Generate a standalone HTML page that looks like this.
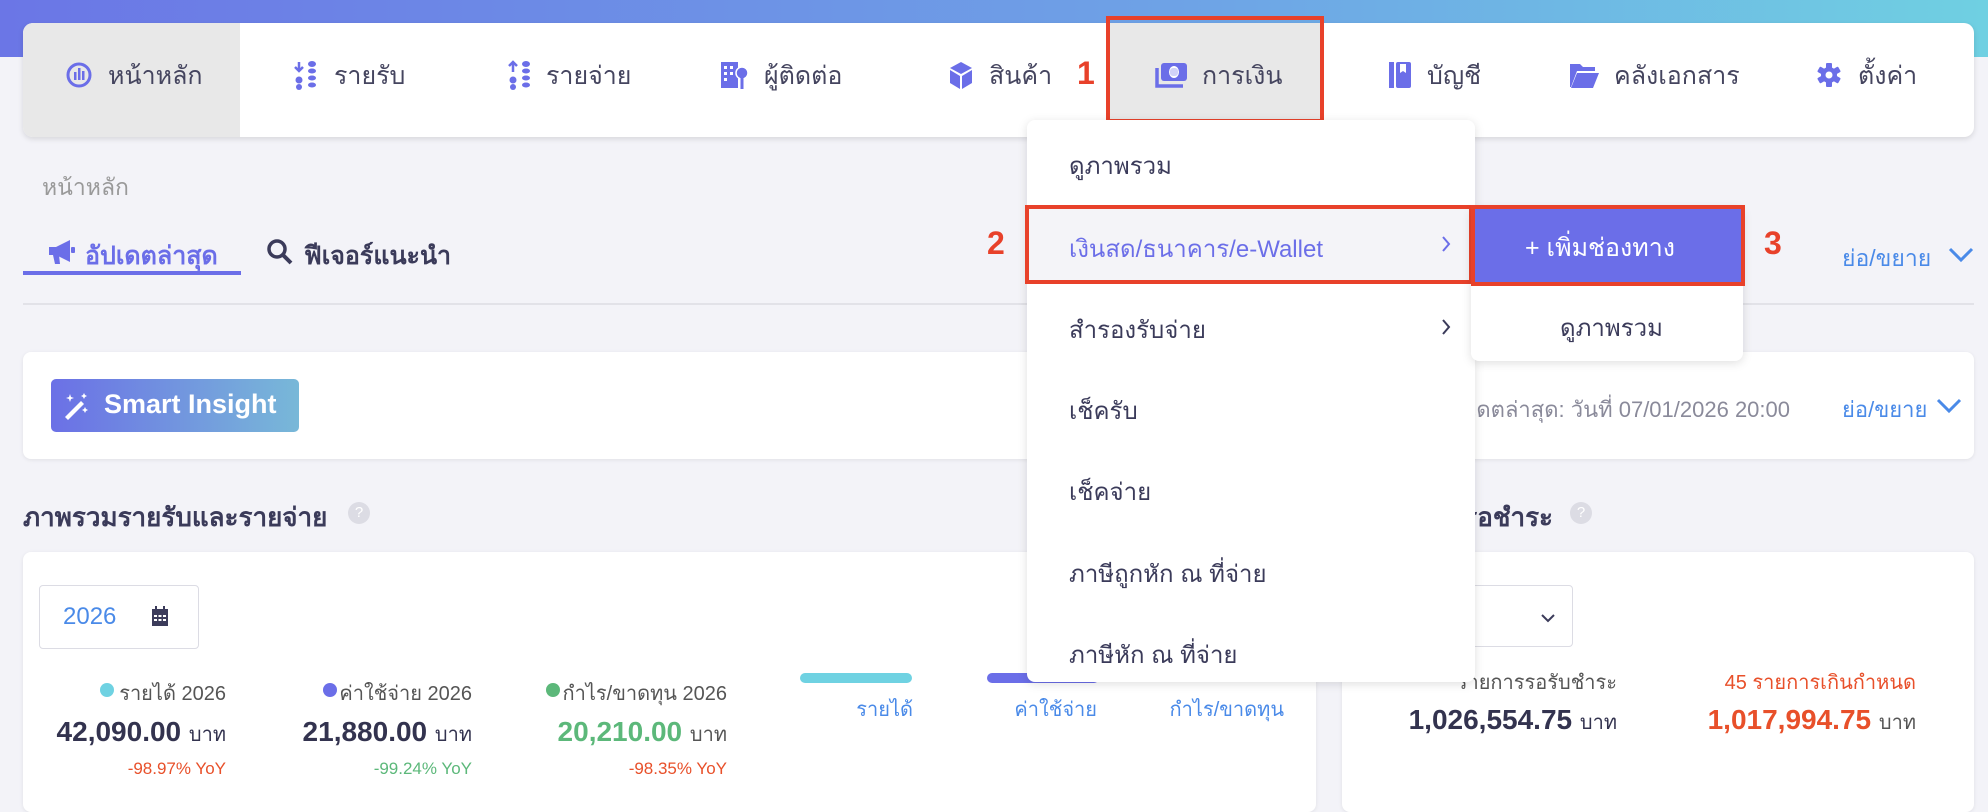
<!DOCTYPE html>
<html><head><meta charset="utf-8">
<style>
*{margin:0;padding:0;box-sizing:border-box}
body{width:1988px;height:780px;overflow:hidden;background:#f3f3f8;font-family:"Liberation Sans","Noto Sans CJK SC",sans-serif;color:#3b3b5a;position:relative}
.a{position:absolute;white-space:nowrap}
.band{left:0;top:0;width:1988px;height:57px;background:linear-gradient(90deg,#6b76e6,#6ea3e6 60%,#6fd0e2)}
.nav{left:23px;top:23px;width:1951px;height:114px;background:#fff;border-radius:10px;box-shadow:0 2px 6px rgba(0,0,0,.12);overflow:hidden}
.navt{font-size:25px;top:56px;color:#45455f}
.ic{position:absolute;top:60px;width:26px;height:30px}
.red{border:4px solid #e8412a}
.rn{color:#e8412a;font-size:32px;font-weight:bold}
.dd{left:1027px;top:120px;width:448px;height:562px;background:#fff;border-radius:8px;box-shadow:0 2px 10px rgba(0,0,0,.13)}
.di{left:1069px;font-size:24px;color:#3b3b5a}
.card{background:#fff;border-radius:8px;box-shadow:0 1px 4px rgba(0,0,0,.08)}
</style></head><body>
<div class="a band"></div>
<div class="a nav">
  <div class="a" style="left:0;top:0;width:217px;height:114px;background:#e8e8e8"></div>
  <div class="a" style="left:1084px;top:0;width:216px;height:114px;background:#e8e8e8"></div>
</div>
<!-- nav icons -->
<svg class="ic" style="left:66px" viewBox="0 0 26 30"><circle cx="13" cy="15" r="11" fill="none" stroke="#6b6ee8" stroke-width="3"/><rect x="8" y="12" width="2.5" height="8" fill="#6b6ee8"/><rect x="12" y="8" width="2.5" height="12" fill="#6b6ee8"/><rect x="16" y="11" width="2.5" height="9" fill="#6b6ee8"/></svg>
<div class="a navt" style="left:108px">หน้าหลัก</div>
<svg class="ic" style="left:293px" viewBox="0 0 26 30"><path d="M6 2v8M2 7l4 4 4-4" stroke="#6b6ee8" stroke-width="2.5" fill="none"/><circle cx="6" cy="20" r="3.5" fill="#6b6ee8"/><circle cx="6" cy="27" r="3" fill="#6b6ee8"/><g fill="#6b6ee8"><ellipse cx="19" cy="4" rx="4" ry="3"/><ellipse cx="19" cy="11" rx="4" ry="2.5"/><ellipse cx="19" cy="18" rx="4" ry="2.5"/><ellipse cx="19" cy="25" rx="4" ry="2.5"/></g></svg>
<div class="a navt" style="left:334px">รายรับ</div>
<svg class="ic" style="left:507px" viewBox="0 0 26 30"><path d="M6 12V3M2 6l4-4 4 4" stroke="#6b6ee8" stroke-width="2.5" fill="none"/><circle cx="6" cy="20" r="3.5" fill="#6b6ee8"/><circle cx="6" cy="27" r="3" fill="#6b6ee8"/><g fill="#6b6ee8"><ellipse cx="19" cy="4" rx="4" ry="3"/><ellipse cx="19" cy="11" rx="4" ry="2.5"/><ellipse cx="19" cy="18" rx="4" ry="2.5"/><ellipse cx="19" cy="25" rx="4" ry="2.5"/></g></svg>
<div class="a navt" style="left:546px">รายจ่าย</div>
<svg class="ic" style="left:720px;width:30px" viewBox="0 0 30 30"><rect x="1" y="2" width="17" height="26" fill="#6b6ee8"/><g fill="#fff"><rect x="4" y="6" width="3" height="3"/><rect x="10" y="6" width="3" height="3"/><rect x="4" y="12" width="3" height="3"/><rect x="10" y="12" width="3" height="3"/><rect x="4" y="18" width="3" height="3"/></g><circle cx="22" cy="13" r="6" fill="#6b6ee8" stroke="#fff" stroke-width="1.5"/><rect x="20.5" y="18" width="3" height="11" fill="#6b6ee8"/></svg>
<div class="a navt" style="left:764px">ผู้ติดต่อ</div>
<svg class="ic" style="left:948px" viewBox="0 0 26 30"><path d="M13 2l11 6-11 6L2 8z" fill="#6b6ee8"/><path d="M2 10l10 6v13L2 23z" fill="#6b6ee8"/><path d="M24 10l-10 6v13l10-6z" fill="#6b6ee8"/></svg>
<div class="a navt" style="left:989px">สินค้า</div>
<div class="a rn" style="left:1077px;top:55px">1</div>
<div class="a red" style="left:1106px;top:16px;width:218px;height:107px"></div>
<svg class="ic" style="left:1155px;width:34px" viewBox="0 0 34 30"><rect x="6" y="3" width="26" height="18" rx="3" fill="#6b6ee8"/><ellipse cx="19" cy="12" rx="5" ry="6" fill="#fff"/><rect x="15" y="8" width="8" height="8" rx="3" fill="#6b6ee8" opacity=".3"/><path d="M2 8v18h26" stroke="#6b6ee8" stroke-width="3.5" fill="none"/></svg>
<div class="a navt" style="left:1202px">การเงิน</div>
<svg class="ic" style="left:1387px" viewBox="0 0 26 30"><rect x="2" y="2" width="5" height="26" fill="#6b6ee8"/><rect x="9" y="2" width="15" height="26" rx="2" fill="#6b6ee8"/><path d="M13 4v9l3-2 3 2V4" fill="#fff"/></svg>
<div class="a navt" style="left:1427px">บัญชี</div>
<svg class="ic" style="left:1568px;width:32px" viewBox="0 0 32 30"><path d="M2 4h10l3 3h12v4H9L3 27H2z" fill="#6b6ee8"/><path d="M9 13h22l-6 15H3z" fill="#6b6ee8"/></svg>
<div class="a navt" style="left:1614px">คลังเอกสาร</div>
<svg class="ic" style="left:1816px" viewBox="0 0 26 30"><g fill="#6b6ee8" transform="translate(13 15)"><circle r="8"/><rect x="-3" y="-12" width="6" height="24" rx="1"/><rect x="-3" y="-12" width="6" height="24" rx="1" transform="rotate(60)"/><rect x="-3" y="-12" width="6" height="24" rx="1" transform="rotate(120)"/></g><circle cx="13" cy="15" r="3.5" fill="#fff"/></svg>
<div class="a navt" style="left:1858px">ตั้งค่า</div>

<!-- breadcrumb & tabs -->
<div class="a" style="left:42px;top:170px;font-size:23px;color:#999">หน้าหลัก</div>
<svg class="a" style="left:47px;top:238px" width="30" height="28" viewBox="0 0 30 28"><path d="M2 9h7l14-7v22L9 17H2z" fill="#6b6ee8"/><path d="M6 17h6l1 9H8z" fill="#6b6ee8"/><rect x="24" y="9" width="4" height="6" rx="1" fill="#6b6ee8"/></svg>
<div class="a" style="left:85px;top:236px;font-size:25px;color:#6b6ee8;font-weight:bold">อัปเดตล่าสุด</div>
<div class="a" style="left:23px;top:271px;width:218px;height:4px;background:#6b6ee8"></div>
<svg class="a" style="left:266px;top:238px" width="28" height="28" viewBox="0 0 28 28"><circle cx="11" cy="11" r="8" fill="none" stroke="#3b3b5a" stroke-width="3.5"/><path d="M17 17l8 8" stroke="#3b3b5a" stroke-width="4"/></svg>
<div class="a" style="left:304px;top:236px;font-size:25px;color:#3b3b5a;font-weight:bold">ฟีเจอร์แนะนำ</div>
<div class="a" style="left:23px;top:303px;width:1951px;height:2px;background:#e2e2e8"></div>

<!-- smart insight -->
<div class="a card" style="left:23px;top:352px;width:1951px;height:107px"></div>
<div class="a" style="left:51px;top:379px;width:248px;height:53px;border-radius:5px;background:linear-gradient(90deg,#6b70e6,#78b8d8)"></div>
<svg class="a" style="left:62px;top:392px" width="28" height="28" viewBox="0 0 28 28"><path d="M3 25L19 9l3 3L6 28z" fill="#fff"/><path d="M8 2l1 3 3 1-3 1-1 3-1-3-3-1 3-1zM22 1l1 2 2 1-2 1-1 2-1-2-2-1 2-1zM23 15l1 2 2 1-2 1-1 2-1-2-2-1 2-1z" fill="#fff"/></svg>
<div class="a" style="left:104px;top:389px;font-size:27px;color:#fff;font-weight:bold">Smart Insight</div>
<div class="a" style="right:198px;top:392px;font-size:22px;color:#8a8a9a">อัปเดตล่าสุด: วันที่ 07/01/2026 20:00</div>
<div class="a" style="left:1842px;top:392px;font-size:22px;color:#4a8ae8">ย่อ/ขยาย</div>
<svg class="a" style="left:1936px;top:397px" width="26" height="18" viewBox="0 0 26 18"><path d="M2 3l11 11L24 3" stroke="#4a8ae8" stroke-width="3" fill="none"/></svg>

<!-- titles -->
<div class="a" style="left:23px;top:497px;font-size:26px;font-weight:bold;color:#3b3b5a">ภาพรวมรายรับและรายจ่าย</div>
<div class="a" style="left:348px;top:502px;width:22px;height:22px;border-radius:50%;background:#dcdce4;color:#fff;font-size:15px;text-align:center;line-height:22px">?</div>
<div class="a" style="right:435px;top:497px;font-size:26px;font-weight:bold;color:#3b3b5a">ลูกหนี้รอชำระ</div>
<div class="a" style="left:1570px;top:502px;width:22px;height:22px;border-radius:50%;background:#dcdce4;color:#fff;font-size:15px;text-align:center;line-height:22px">?</div>

<!-- left card -->
<div class="a card" style="left:23px;top:552px;width:1293px;height:260px"></div>
<div class="a" style="left:39px;top:585px;width:160px;height:64px;border:1px solid #dcdce4;border-radius:4px;background:#fff"></div>
<div class="a" style="left:63px;top:603px;font-size:24px;color:#4a8ae8">2026</div>
<svg class="a" style="left:150px;top:606px" width="20" height="22" viewBox="0 0 20 22"><rect x="2" y="3" width="16" height="17" fill="#3b3b5a"/><rect x="5" y="0" width="2" height="5" fill="#3b3b5a"/><rect x="13" y="0" width="2" height="5" fill="#3b3b5a"/><g fill="#fff"><rect x="4" y="9" width="3" height="2"/><rect x="8.5" y="9" width="3" height="2"/><rect x="13" y="9" width="3" height="2"/><rect x="4" y="13" width="3" height="2"/><rect x="8.5" y="13" width="3" height="2"/><rect x="13" y="13" width="3" height="2"/></g></svg>

<div class="a" style="left:100px;top:683px;width:14px;height:14px;border-radius:50%;background:#6fd2e2"></div>
<div class="a" style="right:1762px;top:677px;font-size:20px;color:#555">รายได้ 2026</div>
<div class="a" style="left:323px;top:683px;width:14px;height:14px;border-radius:50%;background:#6b6ee8"></div>
<div class="a" style="right:1516px;top:677px;font-size:20px;color:#555">ค่าใช้จ่าย 2026</div>
<div class="a" style="left:546px;top:683px;width:14px;height:14px;border-radius:50%;background:#5cb87a"></div>
<div class="a" style="right:1261px;top:677px;font-size:20px;color:#555">กำไร/ขาดทุน 2026</div>

<div class="a" style="right:1762px;top:716px;font-size:28px;font-weight:bold;color:#33334f">42,090.00 <span style="font-size:20px;font-weight:normal">บาท</span></div>
<div class="a" style="right:1516px;top:716px;font-size:28px;font-weight:bold;color:#33334f">21,880.00 <span style="font-size:20px;font-weight:normal">บาท</span></div>
<div class="a" style="right:1261px;top:716px;font-size:28px;font-weight:bold;color:#5cb87a">20,210.00 <span style="font-size:20px;font-weight:normal;color:#555">บาท</span></div>
<div class="a" style="right:1762px;top:759px;font-size:17px;color:#e8502a">-98.97% YoY</div>
<div class="a" style="right:1516px;top:759px;font-size:17px;color:#5cb87a">-99.24% YoY</div>
<div class="a" style="right:1261px;top:759px;font-size:17px;color:#e8502a">-98.35% YoY</div>

<div class="a" style="left:800px;top:673px;width:112px;height:10px;border-radius:5px;background:#6fd2e2"></div>
<div class="a" style="left:987px;top:673px;width:112px;height:10px;border-radius:5px;background:#6b6ee8"></div>
<div class="a" style="right:1075px;top:693px;font-size:20px;color:#4a8ae8">รายได้</div>
<div class="a" style="right:891px;top:693px;font-size:20px;color:#4a8ae8">ค่าใช้จ่าย</div>
<div class="a" style="right:704px;top:693px;font-size:20px;color:#4a8ae8">กำไร/ขาดทุน</div>

<!-- right card -->
<div class="a card" style="left:1342px;top:552px;width:632px;height:260px"></div>
<div class="a" style="left:1370px;top:585px;width:203px;height:62px;border:1px solid #dcdce4;border-radius:4px;background:#fff"></div>
<svg class="a" style="left:1540px;top:612px" width="16" height="12" viewBox="0 0 16 12"><path d="M2 3l6 6 6-6" stroke="#3b3b5a" stroke-width="2" fill="none"/></svg>
<div class="a" style="right:371px;top:666px;font-size:20px;color:#555">รายการรอรับชำระ</div>
<div class="a" style="right:72px;top:666px;font-size:20px;color:#e8502a">45 รายการเกินกำหนด</div>
<div class="a" style="right:371px;top:704px;font-size:28px;font-weight:bold;color:#33334f">1,026,554.75 <span style="font-size:20px;font-weight:normal">บาท</span></div>
<div class="a" style="right:72px;top:704px;font-size:28px;font-weight:bold;color:#e8502a">1,017,994.75 <span style="font-size:20px;font-weight:normal;color:#555">บาท</span></div>

<!-- dropdown -->
<div class="a dd"></div>
<div class="a di" style="top:146px">ดูภาพรวม</div>
<div class="a" style="left:1027px;top:205px;width:446px;height:77px;background:#f4f4f8"></div>
<div class="a red" style="left:1025px;top:205px;width:448px;height:79px"></div>
<div class="a di" style="top:229px;color:#6b6ee8">เงินสด/ธนาคาร/e-Wallet</div>
<svg class="a" style="left:1440px;top:234px" width="12" height="20" viewBox="0 0 12 20"><path d="M3 3l6 7-6 7" stroke="#6b6ee8" stroke-width="2" fill="none"/></svg>
<div class="a di" style="top:310px">สำรองรับจ่าย</div>
<svg class="a" style="left:1440px;top:317px" width="12" height="20" viewBox="0 0 12 20"><path d="M3 3l6 7-6 7" stroke="#3b3b5a" stroke-width="2" fill="none"/></svg>
<div class="a di" style="top:391px">เช็ครับ</div>
<div class="a di" style="top:472px">เช็คจ่าย</div>
<div class="a di" style="top:554px">ภาษีถูกหัก ณ ที่จ่าย</div>
<div class="a di" style="top:635px">ภาษีหัก ณ ที่จ่าย</div>
<div class="a rn" style="left:987px;top:225px">2</div>

<!-- submenu -->
<div class="a" style="left:1471px;top:207px;width:272px;height:154px;background:#fff;border-radius:8px;box-shadow:0 2px 10px rgba(0,0,0,.13)"></div>
<div class="a" style="left:1473px;top:207px;width:270px;height:77px;background:#6b6ee8"></div>
<div class="a red" style="left:1471px;top:205px;width:274px;height:81px"></div>
<div class="a" style="left:1525px;top:228px;font-size:25px;color:#fff">+ เพิ่มช่องทาง</div>
<div class="a" style="left:1560px;top:308px;font-size:24px;color:#3b3b5a">ดูภาพรวม</div>
<div class="a rn" style="left:1764px;top:225px">3</div>
<div class="a" style="left:1842px;top:241px;font-size:23px;color:#4a8ae8">ย่อ/ขยาย</div>
<svg class="a" style="left:1948px;top:246px" width="26" height="18" viewBox="0 0 26 18"><path d="M2 3l11 11L24 3" stroke="#4a8ae8" stroke-width="3" fill="none"/></svg>
</body></html>
